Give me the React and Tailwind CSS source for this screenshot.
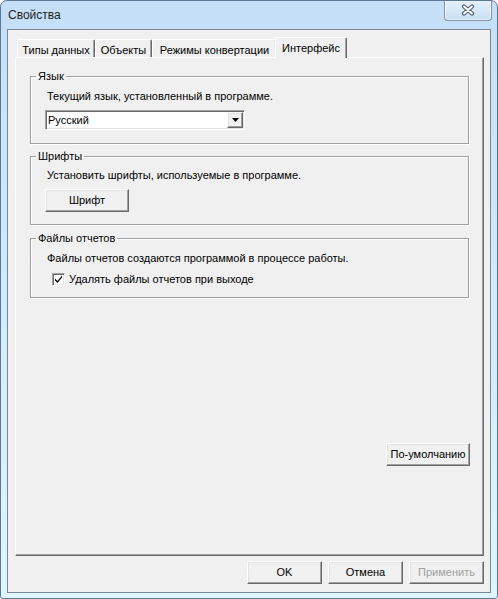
import React from 'react';

const raised =
  'border border-t-white border-l-white border-r-[#696969] border-b-[#696969] shadow-[inset_-1px_-1px_0_#a0a0a0,inset_1px_1px_0_#e3e3e3]';
const sunken =
  'border border-t-[#a0a0a0] border-l-[#a0a0a0] border-r-white border-b-white shadow-[inset_1px_1px_0_#696969,inset_-1px_-1px_0_#e3e3e3]';
const etched = 'border border-[#a0a0a0] shadow-[inset_1px_1px_0_#fff,1px_1px_0_#fff]';

function Button({ children, className = '', disabled }) {
  return (
    <button
      type="button"
      className={`flex items-center justify-center bg-[#f0f0f0] ${raised} ${
        disabled ? 'text-[#a0a0a0]' : 'text-black'
      } ${className}`}
    >
      {children}
    </button>
  );
}

function Group({ title, children, className = '' }) {
  return (
    <fieldset className={`${etched} p-0 m-0 ${className}`}>
      <legend className="ml-[5px] px-[2px] leading-[14px]">{title}</legend>
      <div className="px-[14px]">{children}</div>
    </fieldset>
  );
}

function Tab({ label, width, active }) {
  if (active) {
    return (
      <div
        className={`${width} -ml-[2px] h-[21px] -mb-[1px] relative z-10 bg-[#f0f0f0] border-t border-l border-t-white border-l-white border-r border-r-[#696969] shadow-[inset_-1px_0_0_#a0a0a0] rounded-t-[2px] flex justify-center pt-[3px] leading-[14px]`}
      >
        {label}
      </div>
    );
  }
  return (
    <div
      className={`${width} h-[18px] bg-[#f0f0f0] border-t border-l border-t-white border-l-white border-r border-r-[#696969] shadow-[inset_-1px_0_0_#a0a0a0] rounded-t-[2px] flex justify-center pt-[3px] leading-[14px]`}
    >
      {label}
    </div>
  );
}

export default function App() {
  return (
    <div className="w-[498px] h-[599px] flex flex-col rounded-t-[7px] rounded-b-[3px] border border-[#5c7896] bg-gradient-to-b from-[#c4dff6] via-[#d2ebfb] to-[#dff6fe] font-['Liberation_Sans',Arial,sans-serif] text-[11px] text-black overflow-hidden">
      {/* Title bar */}
      <div className="flex h-[28px] shrink-0 pl-[7px] pr-[5px]">
        <span className="self-center text-[12px] text-[#1e1e1e]">Свойства</span>
        <div className="ml-auto -mt-[1px] h-[21px] w-[48px] rounded-b-[4px] border border-t-0 border-[#7f93aa] bg-gradient-to-b from-[#e6f1fb] to-[#c8dff3] shadow-[inset_0_0_0_1px_rgba(255,255,255,0.6)] flex items-center justify-center">
          <svg width="14" height="12" viewBox="0 0 14 12">
            <path d="M3 2.5 L11 9.5 M11 2.5 L3 9.5" stroke="#4f5d6b" strokeWidth="4.2" strokeLinecap="round" />
            <path d="M3 2.5 L11 9.5 M11 2.5 L3 9.5" stroke="#ffffff" strokeWidth="2" strokeLinecap="round" />
          </svg>
        </div>
      </div>

      {/* Client area */}
      <div className="mx-[6px] mb-[5px] flex-1 flex flex-col border border-[#7b8794] bg-[#f0f0f0] pl-[7px] pr-[6px] pt-[7px]">
        {/* Tabs */}
        <div className="flex items-end h-[20px] pl-[2px]">
          <Tab label="Типы данных" width="w-[78px]" />
          <Tab label="Объекты" width="w-[57px]" />
          <Tab label="Режимы конвертации" width="w-[125px]" />
          <Tab label="Интерфейс" width="w-[72px]" active />
        </div>

        {/* Tab panel */}
        <div className="h-[499px] flex flex-col border border-t-white border-l-white border-r-[#696969] border-b-[#696969] shadow-[inset_-1px_-1px_0_#a0a0a0] px-[14px] pt-[11px]">
          <Group title="Язык" className="h-[75px]">
            <div className="pt-[6px] pl-[2px] leading-[14px]">Текущий язык, установленный в программе.</div>
            <div className={`mt-[7px] w-[200px] h-[20px] bg-white flex items-center ${sunken}`}>
              <span className="flex-1 pl-[2px] leading-[14px]">Русский</span>
              <div className={`h-[16px] w-[16px] mr-[1px] bg-[#f0f0f0] flex items-center justify-center ${raised}`}>
                <svg width="7" height="4" viewBox="0 0 7 4">
                  <path d="M0 0 H7 L3.5 4 Z" fill="#000" />
                </svg>
              </div>
            </div>
          </Group>

          <Group title="Шрифты" className="h-[76px] mt-[5px]">
            <div className="pt-[5px] pl-[2px] leading-[14px]">Установить шрифты, используемые в программе.</div>
            <Button className="mt-[7px] w-[84px] h-[23px]">Шрифт</Button>
          </Group>

          <Group title="Файлы отчетов" className="h-[67px] mt-[6px]">
            <div className="pt-[6px] pl-[2px] leading-[14px]">Файлы отчетов создаются программой в процессе работы.</div>
            <div className="mt-[7px] ml-[7px] flex items-center gap-[4px] leading-[14px]">
              <div className={`w-[13px] h-[13px] bg-white flex items-center justify-center ${sunken}`}>
                <svg width="9" height="9" viewBox="0 0 9 9">
                  <path d="M1 3.5 L1 5.5 L3.5 8 L8 2.5 L8 0.5 L3.5 6 Z" fill="#000" />
                </svg>
              </div>
              <span>Удалять файлы отчетов при выходе</span>
            </div>
          </Group>

          <div className="flex justify-end mt-[145px] -mr-[1px]">
            <Button className="w-[84px] h-[23px]">По-умолчанию</Button>
          </div>
        </div>

        {/* Dialog buttons */}
        <div className="flex justify-end gap-[6px] mt-[5px]">
          <Button className="w-[75px] h-[23px]">OK</Button>
          <Button className="w-[75px] h-[23px]">Отмена</Button>
          <Button className="w-[75px] h-[23px]" disabled>
            Применить
          </Button>
        </div>
      </div>
    </div>
  );
}
